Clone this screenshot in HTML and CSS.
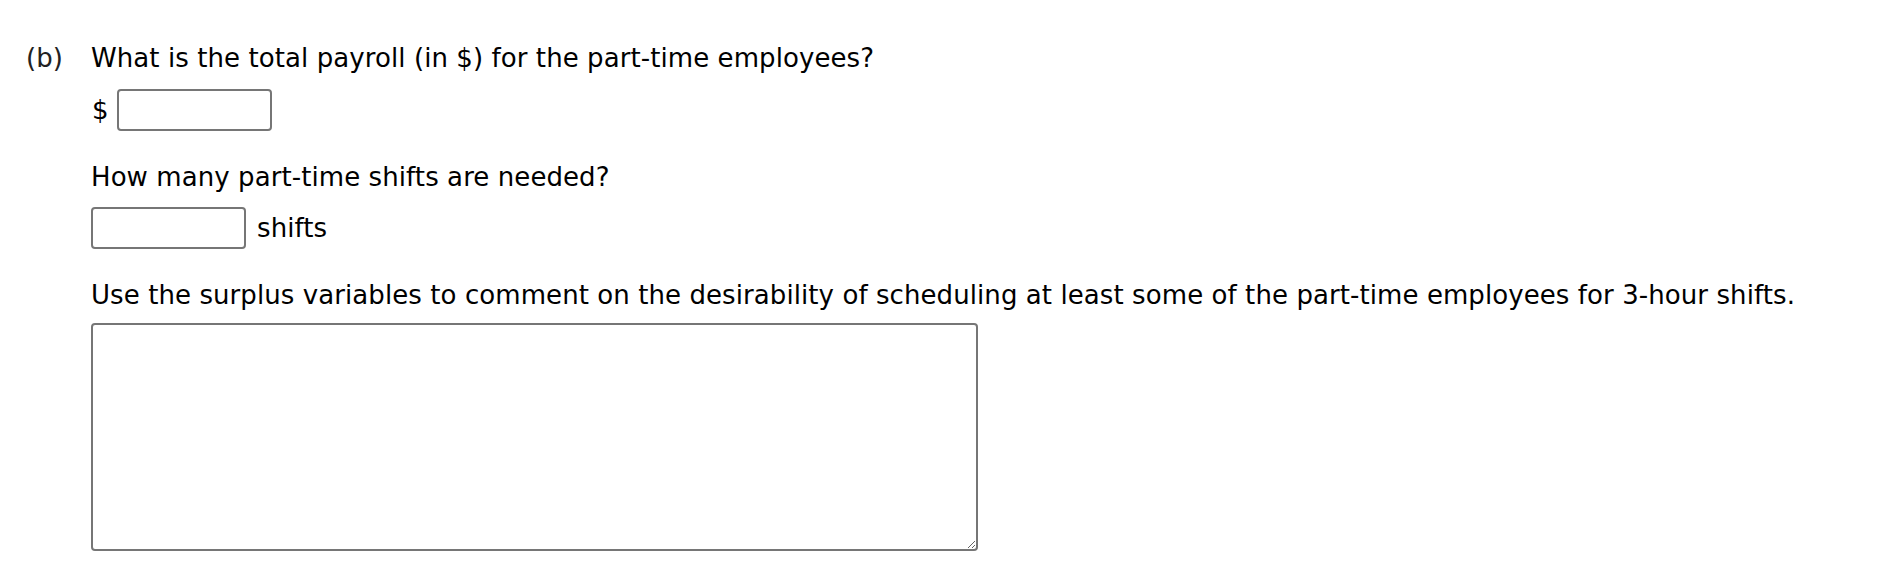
FILE: index.html
```html
<!DOCTYPE html>
<html>
<head>
<meta charset="utf-8">
<link rel="stylesheet" href="styles.css">
</head>
<body>
<div class="part">
  <div class="part-label">(b)</div>
  <div class="part-body">
    <p class="question q-first">What is the total payroll (in $) for the part-time employees?</p>
    <div class="answer-row row-dollar">
      <span class="unit">$</span>
      <input class="answer" type="text">
    </div>
    <p class="question">How many part-time shifts are needed?</p>
    <div class="answer-row row-shifts">
      <input class="answer" type="text">
      <span class="unit">shifts</span>
    </div>
    <p class="question">Use the surplus variables to comment on the desirability of scheduling at least some of the part-time employees for 3-hour shifts.</p>
    <textarea class="essay"></textarea>
  </div>
</div>
</body>
</html>
```
FILE: styles.css
```css
html, body {
  margin: 0;
  padding: 0;
  background: #fff;
}
body {
  font-family: "DejaVu Sans", Verdana, sans-serif;
  font-size: 26px;
  line-height: 32px;
  letter-spacing: 0.08px;
  color: #000;
}
.part {
  display: flex;
  padding: 42px 0 0 26px;
}
.part-label {
  width: 65px;
  flex: none;
  color: #222;
}
.part-body {
  display: flex;
  flex-direction: column;
  align-items: flex-start;
}
.question {
  margin: 30px 0 0 0;
}
.question.q-first {
  margin-top: 0;
}
.answer-row {
  display: flex;
  align-items: center;
}
.row-dollar {
  margin-top: 15px;
  margin-left: 1px;
  gap: 8px;
}
.row-shifts {
  margin-top: 14px;
  gap: 11px;
}
.answer {
  box-sizing: border-box;
  width: 155px;
  height: 42px;
  border: 2px solid #767676;
  border-radius: 4px;
  background: #fff;
  margin: 0;
  padding: 0 6px;
  font: inherit;
}
.essay {
  box-sizing: border-box;
  margin-top: 12px;
  width: 887px;
  height: 228px;
  border: 2px solid #767676;
  border-radius: 4px;
  background: #fff;
  padding: 4px;
  font: inherit;
  resize: both;
}
```
